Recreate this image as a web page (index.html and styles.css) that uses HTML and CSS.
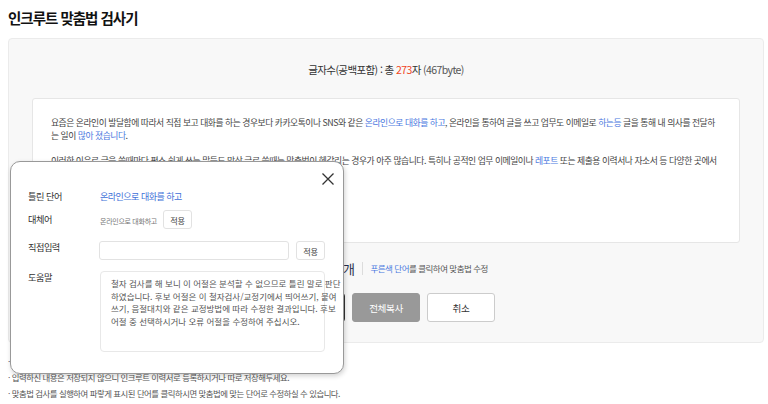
FILE: index.html
```html
<!DOCTYPE html>
<html lang="ko">
<head>
<meta charset="utf-8">
<title>인크루트 맞춤법 검사기</title>
<link rel="stylesheet" href="styles.css">
</head>
<body>
<div class="page">
  <h1 class="title">인크루트 맞춤법 검사기</h1>
  <section class="checker">
    <p class="counter">글자수(공백포함) : 총 <em class="num">273</em>자 <span class="bytes">(467byte)</span></p>
    <div class="editor">
      <p>요즘은 온라인이 발달함에 따라서 직접 보고 대화를 하는 경우보다 카카오톡이나 SNS와 같은 <span class="err">온라인으로 대화를 하고</span>, 온라인을 통하여 글을 쓰고 업무도 이메일로 <span class="err">하는등</span> 글을 통해 내 의사를 전달하<br>는 일이 <span class="err">많아 졌습니다</span>.</p>
      <p>이러한 이유로 글을 쓸때마다 평소 쉽게 쓰는 말들도 막상 글로 쓸때는 맞춤법이 헷갈리는 경우가 아주 많습니다. 특히나 공적인 업무 이메일이나 <span class="err">레포트</span> 또는 제출용 이력서나 자소서 등 다양한 곳에서<br>맞춤법을 지켜 글을 써야 합니다.</p>
    </div>
    <div class="status">
      <span class="count">오류 단어 3개</span>
      <span class="sep"></span>
      <span class="hint"><span class="blue">푸른색 단어</span>를 클릭하여 맞춤법 수정</span>
    </div>
    <div class="actions">
      <button class="btn btn-dark">맞춤법 검사</button>
      <button class="btn btn-gray">전체복사</button>
      <button class="btn btn-white">취소</button>
    </div>
  </section>
  <ul class="notes">
    <li>· 최대 1,000자까지 입력 가능합니다.</li>
    <li>· 입력하신 내용은 저장되지 않으니 인크루트 이력서로 등록하시거나 따로 저장해두세요.</li>
    <li>· 맞춤법 검사를 실행하여 파랗게 표시된 단어를 클릭하시면 맞춤법에 맞는 단어로 수정하실 수 있습니다.</li>
  </ul>

  <div class="popup">
    <button class="close" aria-label="닫기">
      <svg width="12" height="12" viewBox="0 0 12 12"><path d="M0.5 0.5 L11.5 11.5 M11.5 0.5 L0.5 11.5" stroke="#333" stroke-width="1.3" fill="none"/></svg>
    </button>
    <div class="row row-wrong">
      <span class="label">틀린 단어</span>
      <span class="wrong">온라인으로 대화를 하고</span>
    </div>
    <div class="row row-alt">
      <span class="label">대체어</span>
      <span class="alt">온라인으로 대화하고</span>
      <button class="small-btn">적용</button>
    </div>
    <div class="row row-input">
      <span class="label">직접입력</span>
      <input class="direct" type="text">
      <button class="small-btn">적용</button>
    </div>
    <div class="row row-help">
      <span class="label">도움말</span>
      <div class="help">철자 검사를 해 보니 이 어절은 분석할 수 없으므로 틀린 말로 판단<br>하였습니다. 후보 어절은 이 철자검사/교정기에서 띄어쓰기, 붙여<br>쓰기, 음절대치와 같은 교정방법에 따라 수정한 결과입니다. 후보<br>어절 중 선택하시거나 오류 어절을 수정하여 주십시오.</div>
    </div>
  </div>
</div>
</body>
</html>
```

FILE: styles.css
```css
* { box-sizing: border-box; }
html, body { margin: 0; padding: 0; background: #fff; }
body {
  font-family: "Noto Sans CJK KR", "Noto Sans", sans-serif;
  color: #333;
}
.page { position: relative; width: 768px; height: 404px; padding-top: 7px; overflow: hidden; }

.title {
  margin: 0 0 10px 8px;
  font-size: 14.5px;
  letter-spacing: -1px;
  line-height: 21px;
  font-weight: 700;
  color: #111;
}

.checker {
  margin: 0 4px 0 8px;
  background: #f8f8f8;
  border: 1px solid #ebebeb;
  border-radius: 4px;
  padding: 23px 23px 20px;
}
.counter {
  margin: 0;
  text-align: center;
  font-size: 10.5px;
  letter-spacing: -0.6px;
  line-height: 16px;
  color: #333;
}
.counter .num { font-style: normal; color: #f0461e; }
.counter .bytes { color: #555; }

.editor {
  margin-top: 20px;
  height: 145px;
  background: #fff;
  border: 1px solid #e6e6e6;
  border-radius: 3px;
  padding: 18px 18px 0;
  font-size: 8.8px;
  letter-spacing: -0.47px;
  line-height: 12.5px;
  color: #444;
  white-space: nowrap;
}
.editor p { margin: 0 0 12.5px; }
.err { color: #4a78e0; }

.status {
  margin-top: 17px;
  display: flex;
  justify-content: center;
  align-items: center;
  height: 16px;
}
.count { font-size: 13px; letter-spacing: -0.5px; color: #1f2d4d; }
.sep { width: 1px; height: 13px; background: #dcdcdc; margin: 0 7px 0 8px; }
.hint { font-size: 8.5px; letter-spacing: -0.5px; color: #555; }
.hint .blue { color: #4a78e0; }

.actions {
  margin-top: 17px;
  display: flex;
  justify-content: center;
  gap: 7px;
}
.btn {
  width: 68px;
  height: 29px;
  border-radius: 3px;
  font-family: inherit;
  font-size: 9.6px;
  letter-spacing: -0.4px;
  padding: 0;
}
.btn-dark { background: #fff; border: 1px solid #333; color: #333; }
.btn-gray { background: #999; border: 1px solid #999; color: #fff; }
.btn-white { background: #fff; border: 1px solid #ccc; color: #333; }

.notes {
  list-style: none;
  margin: 10px 0 0 8px;
  padding: 0;
  font-size: 8.4px;
  letter-spacing: -0.47px;
  line-height: 16px;
  color: #555;
}

.popup {
  position: absolute;
  left: 10px;
  top: 161px;
  width: 334px;
  height: 213px;
  background: #fff;
  border: 1px solid #999;
  border-radius: 10px;
  box-shadow: 1px 2px 5px rgba(0,0,0,0.18);
  padding: 28px 17px 20px;
}
.close {
  position: absolute;
  top: 11px;
  right: 9px;
  width: 12px;
  height: 12px;
  padding: 0;
  border: 0;
  background: none;
  display: block;
}
.close svg { display: block; }

.row { display: flex; align-items: flex-start; }
.label {
  flex: 0 0 72px;
  font-size: 9.2px;
  letter-spacing: -0.5px;
  line-height: 13px;
  color: #333;
}
.row-wrong { height: 13px; }
.wrong { font-size: 9px; letter-spacing: -0.5px; line-height: 13px; color: #3d6fd8; }
.row-alt { margin-top: 7px; height: 19px; align-items: center; }
.alt { font-size: 7px; letter-spacing: -0.3px; color: #777; margin-top: 3px; margin-right: 6px; }
.small-btn {
  width: 29px;
  height: 19px;
  padding: 0;
  background: #fff;
  border: 1px solid #e2e2e2;
  border-radius: 3px;
  font-family: inherit;
  font-size: 8.2px;
  letter-spacing: -0.3px;
  color: #444;
}
.row-input { margin-top: 12px; height: 19px; }
.direct {
  width: 190px;
  height: 19px;
  margin: 0 7px 0 -1px;
  border: 1px solid #e2e2e2;
  border-radius: 3px;
  background: #fff;
  padding: 0;
}
.row-help { margin-top: 11px; }
.help {
  width: 225px;
  height: 81px;
  border: 1px solid #e8e8e8;
  border-radius: 4px;
  padding: 5px 0 0 10px;
  font-size: 8.5px;
  line-height: 12.7px;
  color: #555;
  white-space: nowrap;
}
```
